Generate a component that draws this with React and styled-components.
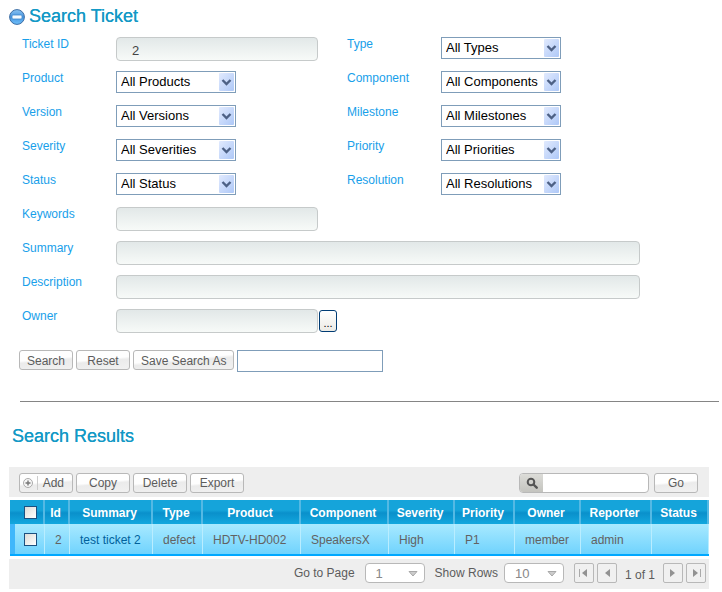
import React from "react";
import styled, { createGlobalStyle, css } from "styled-components";

const GlobalStyle = createGlobalStyle`
  * { box-sizing: border-box; }
  body {
    margin: 0;
    background: #fff;
    color: #5c5c5c;
    font: 12px/14px "Liberation Sans", Arial, sans-serif;
  }
  button, input, select { font: inherit; color: inherit; margin: 0; }
`;

const Page = styled.main`
  padding: 6px 3px 3px 9px;
`;

const TitleBar = styled.header`
  display: flex;
  align-items: center;
  gap: 4px;
  height: 20px;
`;

const Heading = styled.h2`
  margin: 0;
  font-size: 18px;
  line-height: 20px;
  font-weight: 400;
  color: #1399c6;
  -webkit-text-stroke: 1px transparent;
  text-shadow: 0 0 0 #1399c6;
`;

const CollapseButton = styled.button`
  display: flex;
  padding: 2px 0 0;
  border: 0;
  background: none;
`;

const FieldGrid = styled.div`
  display: grid;
  grid-template-columns: 94px 231px 94px minmax(0, 1fr);
  grid-auto-rows: 24px;
  row-gap: 10px;
  align-items: start;
  margin: 11px 0 0 13px;
`;

const Label = styled.label`
  grid-column: ${(p) => p.$col || 1};
  color: #18a0ea;
`;

const Control = styled.div`
  grid-column: ${(p) => (p.$wide ? "2 / -1" : "auto")};
  display: flex;
  align-items: center;
  gap: 1px;
`;

const SoftInput = styled.input`
  width: ${(p) => (p.$wide ? "524px" : "202px")};
  max-width: 100%;
  height: 24px;
  padding: 2px 8px 0 15px;
  border: 1px solid #c6caca;
  border-radius: 4px;
  background: linear-gradient(#e2e8e8, #f7faf8);
  color: #444;
  font-size: 13px;
`;

const PickButton = styled.button`
  width: 18px;
  height: 22px;
  padding: 4px 0 0;
  border: 1px solid #003c74;
  border-radius: 3px;
  background: linear-gradient(#fff, #ecebe5);
  color: #000;
  font-size: 11px;
  line-height: 12px;
`;

const SelectBox = styled.span`
  display: grid;
  width: 120px;
  height: 22px;
  border: 1px solid #7f9db9;
  background: #fff;

  > * { grid-area: 1 / 1; }
  > svg { justify-self: end; margin: 1px; pointer-events: none; }
`;

const PlainSelect = styled.select`
  appearance: none;
  width: 100%;
  height: 20px;
  padding: 0 18px 1px 4px;
  border: 0;
  background: none;
  color: #000;
  font-size: 13px;
`;

const ButtonRow = styled.div`
  display: flex;
  flex-wrap: wrap;
  gap: 3px;
  margin: 17px 0 0 10px;
`;

const Button = styled.button`
  display: flex;
  align-items: center;
  justify-content: center;
  min-width: ${(p) => (p.$small ? "44px" : "54px")};
  height: 20px;
  padding: 1px 7px 0;
  border: 1px solid #b8b8b8;
  border-radius: 3px;
  background: linear-gradient(175deg, #fefefe 45%, #ebebeb 55%, #f1f1f1);
  white-space: nowrap;
  ${(p) => p.$icon && css`
    justify-content: space-between;
    padding: 0 8px 0 3px;
    svg { flex: none; }
  `}
`;

const NameInput = styled.input`
  width: 146px;
  height: 22px;
  border: 1px solid #7f9db9;
  background: #fff;
`;

const Divider = styled.hr`
  height: 1px;
  margin: 29px 0 0 11px;
  border: 0;
  background: #858585;
`;

const Results = styled.section`
  margin: 24px 10px 0 0;
`;

const ResultsTitle = styled.div`
  padding-left: 3px;
`;

const Bar = styled.div`
  display: flex;
  align-items: center;
  gap: 3px;
  min-height: 30px;
  padding: 1px 11px 0 10px;
  background: #eee;
`;

const Toolbar = styled(Bar)`
  margin-top: 21px;
`;

const SearchBox = styled.label`
  display: flex;
  width: 130px;
  height: 20px;
  margin: 0 2px 0 auto;
  overflow: hidden;
  border: 1px solid #b8b8b8;
  border-radius: 4px;
  background: #fff;
`;

const SearchMark = styled.span`
  display: grid;
  place-items: center;
  width: 23px;
  background: linear-gradient(#dcdcd8, #c4c4bf);
`;

const SearchInput = styled.input`
  flex: 1;
  min-width: 0;
  border: 0;
  outline: 0;
  background: none;
`;

const Table = styled.table`
  width: calc(100% - 1px);
  margin: 3px 0 3px 1px;
  table-layout: fixed;
  border-collapse: separate;
  border-spacing: 0;
  border-bottom: 2px solid #00a8ff;
`;

const Col = styled.col`
  width: ${(p) => p.$w}px;
`;

const HeadCell = styled.th`
  height: 24px;
  padding: 1px 2px 0 0;
  border-right: 2px solid #54b9e4;
  background: linear-gradient(#15a4da 0 42%, #0a90cb 54%, #12a7de);
  color: #fff;
  font-weight: 700;
  text-align: center;
`;

const Cell = styled.td`
  height: 30px;
  padding: 2px 0 0 10px;
  border-right: 1px solid #b9edff;
  background: linear-gradient(#a8e9ff, #70d3fd);
  color: ${(p) => (p.$link ? "#00619c" : "#626262")};
  white-space: nowrap;
`;

const PickCell = styled(Cell)`
  padding: 0;
  border-left: 5px solid #40b7fb;
`;

const CheckBox = styled.input`
  appearance: none;
  display: block;
  width: 13px;
  height: 13px;
  margin: 0 0 0 ${(p) => (p.$head ? "14px" : "9px")};
  border: 1px solid #1c5180;
  background: linear-gradient(135deg, #dcdcd7, #fff);
`;

const Footer = styled(Bar)`
  justify-content: flex-end;
  padding: 0 3px 2px;
`;

const PageLabel = styled.label`
  display: flex;
  align-items: center;
  gap: ${(p) => p.$gap}px;
  margin-right: 7px;
`;

const PagerSelectBox = styled(SelectBox)`
  width: 60px;
  height: 20px;
  border-color: #b8b8b8;
  border-radius: 4px;

  > svg { margin: 7px 6px 0 0; }
`;

const PagerSelect = styled(PlainSelect)`
  height: 18px;
  padding: 1px 20px 0 10px;
  color: #888;
`;

const PagerButton = styled.button`
  display: grid;
  place-items: center;
  width: 20px;
  height: 20px;
  padding: 0;
  border: 1px solid #b8b8b8;
  border-radius: 2px;
  background: #f0f0f0;
`;

const PageCount = styled.span`
  padding: 4px 5px 0 5px;
`;

const ChevronIcon = () => (
  <svg width="15" height="18" viewBox="0 0 15 18" aria-hidden="true">
    <defs>
      <linearGradient id="chevronFill" x1="0" y1="0" x2="1" y2="1">
        <stop offset="0" stopColor="#e1eafe" />
        <stop offset="1" stopColor="#aec8f7" />
      </linearGradient>
    </defs>
    <rect width="15" height="18" rx="1" fill="url(#chevronFill)" />
    <path d="M3.5 7 7.5 11 11.5 7" fill="none" stroke="#4d6185" strokeWidth="2.4" />
  </svg>
);

const MinusIcon = () => (
  <svg width="16" height="16" viewBox="0 0 16 16" aria-hidden="true">
    <defs>
      <linearGradient id="minusFill" x1="0" y1="0" x2="0" y2="1">
        <stop offset="0" stopColor="#8cc4f3" />
        <stop offset="0.5" stopColor="#4795df" />
        <stop offset="1" stopColor="#6fc0fb" />
      </linearGradient>
    </defs>
    <circle cx="8" cy="8" r="7.4" fill="url(#minusFill)" stroke="#3e6da3" strokeWidth="1" />
    <rect x="3" y="6" width="10" height="4" rx="1" fill="#f4faff" stroke="#3d85cc" strokeWidth="0.8" />
  </svg>
);

const PlusIcon = () => (
  <svg width="16" height="18" viewBox="0 0 16 18" aria-hidden="true">
    <circle cx="5" cy="9" r="4.5" fill="#f6f6f6" stroke="#aaa" />
    <path d="M5 6.5v5M2.5 9h5" stroke="#777" strokeWidth="1.4" />
    <path d="M14.5 2v14" stroke="#ccc" />
  </svg>
);

const MagnifierIcon = () => (
  <svg width="12" height="12" viewBox="0 0 12 12" aria-hidden="true">
    <circle cx="5" cy="5" r="3.3" fill="none" stroke="#555" strokeWidth="2" />
    <path d="m7.5 7.5 3.2 3.2" stroke="#555" strokeWidth="2.4" strokeLinecap="round" />
  </svg>
);

const CaretIcon = () => (
  <svg width="10" height="6" viewBox="0 0 10 6" aria-hidden="true">
    <path d="M1 .5h8L5 5z" fill="#ccc" stroke="#a8a8a8" />
  </svg>
);

const StepIcon = ({ forward, edge }) => (
  <svg width="12" height="10" viewBox="0 0 12 10" aria-hidden="true">
    <path d={forward ? "M3 1 8 5 3 9z" : "M9 1 4 5 9 9z"} fill="#929292" />
    {edge && <path d={forward ? "M10.500 1v8" : "M1.500 1v8"} stroke="#aaa" />}
  </svg>
);

const fieldRows = [
  ["Ticket ID", null, "Type", "All Types"],
  ["Product", "All Products", "Component", "All Components"],
  ["Version", "All Versions", "Milestone", "All Milestones"],
  ["Severity", "All Severities", "Priority", "All Priorities"],
  ["Status", "All Status", "Resolution", "All Resolutions"],
];

const columns = [
  ["Id", 25, "2"],
  ["Summary", 83, "test ticket 2"],
  ["Type", 50, "defect"],
  ["Product", 98, "HDTV-HD002"],
  ["Component", 88, "SpeakersX"],
  ["Severity", 66, "High"],
  ["Priority", 60, "P1"],
  ["Owner", 66, "member"],
  ["Reporter", 71, "admin"],
  ["Status", 57, ""],
];

function SelectField({ id, col, label, value }) {
  return (
    <>
      <Label htmlFor={id} $col={col}>{label}</Label>
      <SelectBox>
        <PlainSelect id={id}><option>{value}</option></PlainSelect>
        <ChevronIcon />
      </SelectBox>
    </>
  );
}

function TextField({ label, wide, value, children }) {
  const id = label.toLowerCase().replace(" ", "-");
  return (
    <>
      <Label htmlFor={id}>{label}</Label>
      <Control $wide={label !== "Ticket ID"}>
        <SoftInput id={id} $wide={wide} defaultValue={value} />
        {children}
      </Control>
    </>
  );
}

function PagerField({ label, value, gap }) {
  return (
    <PageLabel $gap={gap}>
      {label}
      <PagerSelectBox>
        <PagerSelect><option>{value}</option></PagerSelect>
        <CaretIcon />
      </PagerSelectBox>
    </PageLabel>
  );
}

export default function App() {
  return (
    <Page>
      <GlobalStyle />
      <TitleBar>
        <CollapseButton type="button" aria-label="Collapse"><MinusIcon /></CollapseButton>
        <Heading>Search Ticket</Heading>
      </TitleBar>
      <form onSubmit={(e) => e.preventDefault()}>
        <FieldGrid>
          {fieldRows.map(([left, leftValue, right, rightValue]) => (
            <React.Fragment key={left}>
              {leftValue ? (
                <SelectField id={left} label={left} value={leftValue} />
              ) : (
                <TextField label={left} value="2" />
              )}
              <SelectField id={right} col={3} label={right} value={rightValue} />
            </React.Fragment>
          ))}
          <TextField label="Keywords" />
          <TextField label="Summary" wide />
          <TextField label="Description" wide />
          <TextField label="Owner">
            <PickButton type="button" aria-label="Choose owner">...</PickButton>
          </TextField>
        </FieldGrid>
        <ButtonRow>
          <Button type="submit">Search</Button>
          <Button type="reset">Reset</Button>
          <Button type="button">Save Search As</Button>
          <NameInput aria-label="Saved search name" />
        </ButtonRow>
      </form>
      <Divider />
      <Results>
        <ResultsTitle><Heading>Search Results</Heading></ResultsTitle>
        <Toolbar>
          <Button type="button" $icon><PlusIcon />Add</Button>
          <Button type="button">Copy</Button>
          <Button type="button">Delete</Button>
          <Button type="button">Export</Button>
          <SearchBox>
            <SearchMark><MagnifierIcon /></SearchMark>
            <SearchInput aria-label="Search results" />
          </SearchBox>
          <Button type="button" $small>Go</Button>
        </Toolbar>
        <Table>
          <colgroup>
            <Col $w={35} />
            {columns.map(([name, width]) => <Col key={name} $w={width} />)}
          </colgroup>
          <thead>
            <tr>
              <HeadCell><CheckBox type="checkbox" $head aria-label="Select all" /></HeadCell>
              {columns.map(([name]) => <HeadCell key={name} scope="col">{name}</HeadCell>)}
            </tr>
          </thead>
          <tbody>
            <tr>
              <PickCell><CheckBox type="checkbox" aria-label="Select ticket 2" /></PickCell>
              {columns.map(([name, , value]) => (
                <Cell key={name} $link={name === "Summary"}>{value}</Cell>
              ))}
            </tr>
          </tbody>
        </Table>
        <Footer>
          <PagerField label="Go to Page" value="1" gap={10} />
          <PagerField label="Show Rows" value="10" gap={6} />
          <PagerButton type="button" aria-label="First page"><StepIcon edge /></PagerButton>
          <PagerButton type="button" aria-label="Previous page"><StepIcon /></PagerButton>
          <PageCount>1 of 1</PageCount>
          <PagerButton type="button" aria-label="Next page"><StepIcon forward /></PagerButton>
          <PagerButton type="button" aria-label="Last page"><StepIcon forward edge /></PagerButton>
        </Footer>
      </Results>
    </Page>
  );
}
